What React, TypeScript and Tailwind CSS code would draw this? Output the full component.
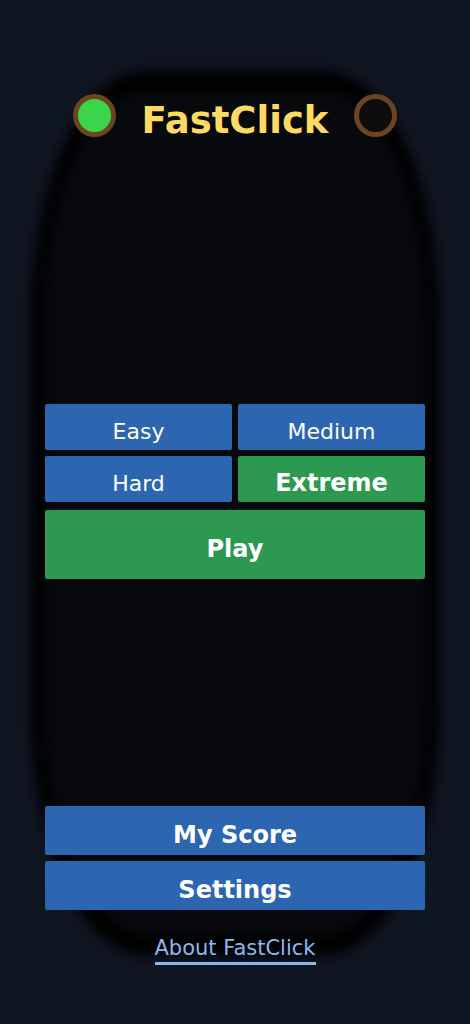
import { useState } from "react"
import clsx from "clsx"

const LEVELS = ["Easy", "Medium", "Hard", "Extreme"] as const

type Level = (typeof LEVELS)[number]

export default function App() {
  const [level, setLevel] = useState<Level>("Extreme")

  return (
    <div className="grid min-h-screen bg-[#111722] font-['DejaVu_Sans',sans-serif] text-white">
      {/* Glowing dark panel, sits in the same grid cell as the content */}
      <div
        aria-hidden="true"
        className="col-start-1 row-start-1 mx-8 mt-[72px] mb-[70px] rounded-[28%/28%] border-x-[12px] border-y-[18px] border-black bg-[#07090d] shadow-[0_0_16px_2px_#04061480] blur-[6px]"
      />

      <div className="z-10 col-start-1 row-start-1 flex flex-col px-[45px] pt-[94px] pb-[59px]">
        <header className="flex items-center justify-between px-7">
          <Lamp on />
          <h1 className="pt-2.5 text-[37px] leading-8 font-bold text-[#ffda63]">FastClick</h1>
          <Lamp />
        </header>

        <main className="flex flex-1 flex-col justify-center gap-2 pt-10">
          <div className="grid grid-cols-2 gap-1.5">
            {LEVELS.map((name) => (
              <button
                key={name}
                type="button"
                aria-pressed={name === level}
                onClick={() => setLevel(name)}
                className={clsx(
                  "h-[46px] rounded-xs pt-2",
                  name === level
                    ? "bg-[#2d984f] text-2xl font-bold"
                    : "bg-[#2c66b0] text-[22px]",
                )}
              >
                {name}
              </button>
            ))}
          </div>
          <button type="button" className="h-[69px] rounded-xs bg-[#2d984f] pt-2 text-2xl font-bold">
            Play
          </button>
        </main>

        <footer className="flex flex-col gap-1.5">
          <MenuButton label="My Score" />
          <MenuButton label="Settings" />
          <a
            href="#about"
            className="mt-[18px] self-center border-b-[3px] border-[#8bb9ee] text-[21px] leading-7 text-[#8bb9ee]"
          >
            About FastClick
          </a>
        </footer>
      </div>
    </div>
  )
}

function Lamp({ on = false }: { on?: boolean }) {
  return (
    <span
      className={clsx(
        "size-[43px] shrink-0 rounded-full border-[5px] border-[#6b4522]",
        on ? "bg-[#3bd549]" : "bg-[#0d0d0d]",
      )}
    />
  )
}

function MenuButton({ label }: { label: string }) {
  return (
    <button type="button" className="h-[49px] rounded-xs bg-[#2c66b0] pt-2 text-2xl font-bold">
      {label}
    </button>
  )
}
